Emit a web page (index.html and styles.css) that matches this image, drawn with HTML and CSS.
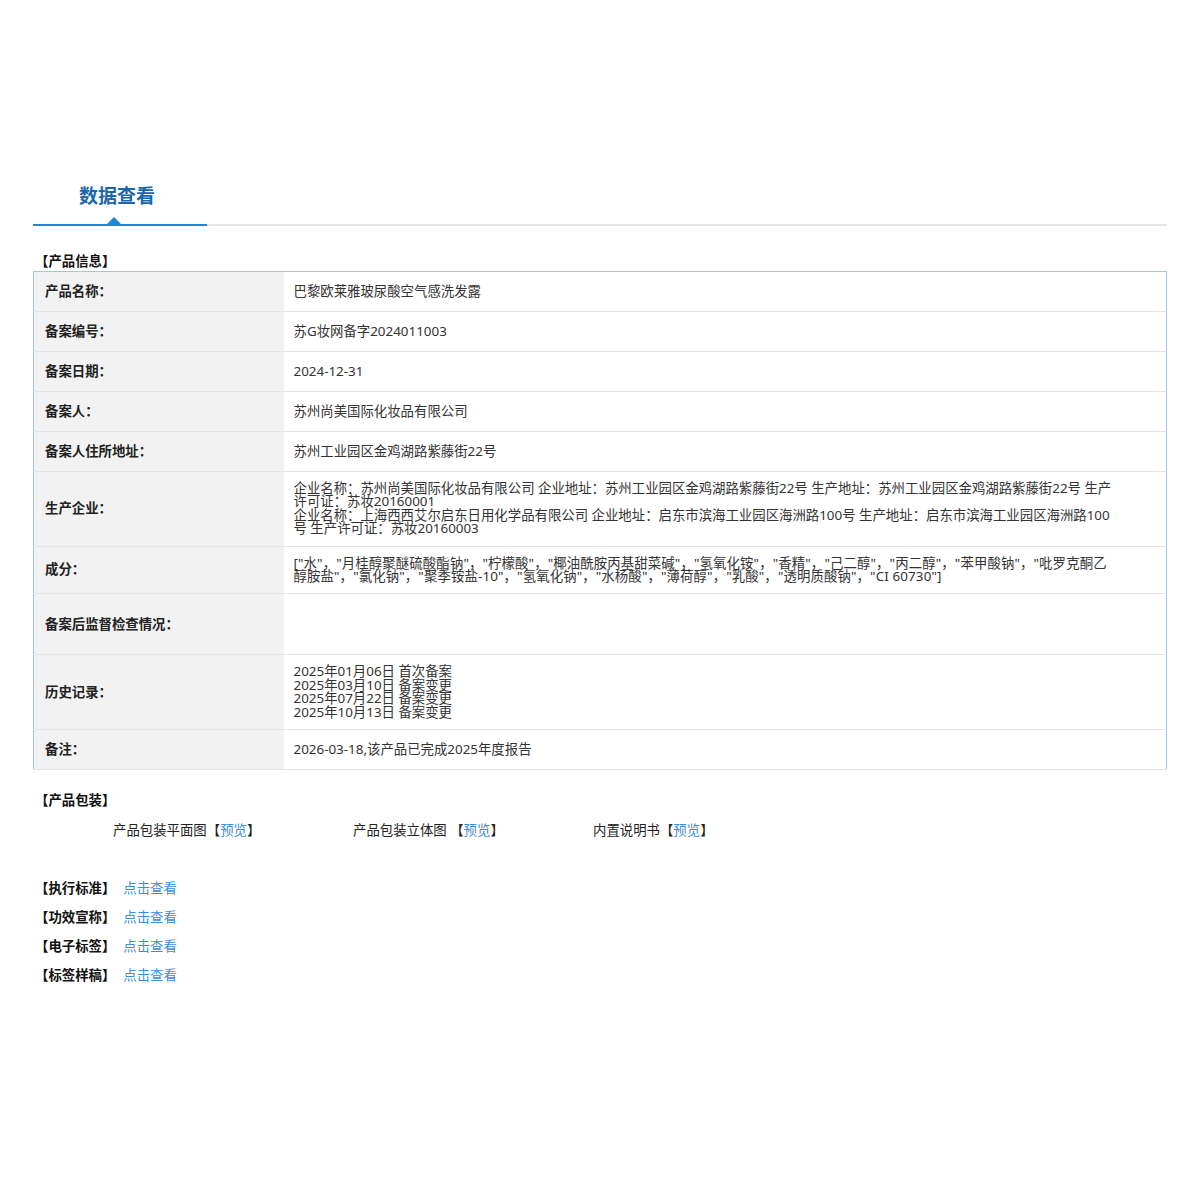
FILE: index.html
```html
<!DOCTYPE html>
<html lang="zh-CN">
<head>
<meta charset="utf-8">
<title>数据查看</title>
<link rel="stylesheet" href="styles.css">
</head>
<body>
<div class="page">
  <div class="tabs">
    <div class="tab-active"><span class="tab-text">数据查看</span><span class="tab-arrow"></span></div>
  </div>

  <div class="sec-title sec-first">【产品信息】</div>
  <table class="info">
    <tr><th>产品名称：</th><td>巴黎欧莱雅玻尿酸空气感洗发露</td></tr>
    <tr><th>备案编号：</th><td>苏G妆网备字2024011003</td></tr>
    <tr><th>备案日期：</th><td>2024-12-31</td></tr>
    <tr><th>备案人：</th><td>苏州尚美国际化妆品有限公司</td></tr>
    <tr><th>备案人住所地址：</th><td>苏州工业园区金鸡湖路紫藤街22号</td></tr>
    <tr><th>生产企业：</th><td class="multi">企业名称：苏州尚美国际化妆品有限公司 企业地址：苏州工业园区金鸡湖路紫藤街22号 生产地址：苏州工业园区金鸡湖路紫藤街22号 生产许可证：苏妆20160001<br>企业名称：上海西西艾尔启东日用化学品有限公司 企业地址：启东市滨海工业园区海洲路100号 生产地址：启东市滨海工业园区海洲路100号 生产许可证：苏妆20160003</td></tr>
    <tr><th>成分：</th><td class="multi ingredients">["水"，"月桂醇聚醚硫酸酯钠"，"柠檬酸"，"椰油酰胺丙基甜菜碱"，"氢氧化铵"，"香精"，"己二醇"，"丙二醇"，"苯甲酸钠"，"吡罗克酮乙醇胺盐"，"氯化钠"，"聚季铵盐-10"，"氢氧化钠"，"水杨酸"，"薄荷醇"，"乳酸"，"透明质酸钠"，"CI 60730"]</td></tr>
    <tr class="tall"><th>备案后监督检查情况：</th><td></td></tr>
    <tr><th>历史记录：</th><td class="multi">2025年01月06日 首次备案<br>2025年03月10日 备案变更<br>2025年07月22日 备案变更<br>2025年10月13日 备案变更</td></tr>
    <tr><th>备注：</th><td>2026-03-18,该产品已完成2025年度报告</td></tr>
  </table>

  <div class="sec-title sec-pack">【产品包装】</div>
  <div class="pack">
    <div class="pack-item">产品包装平面图【<a href="#">预览</a>】</div>
    <div class="pack-item">产品包装立体图 【<a href="#">预览</a>】</div>
    <div class="pack-item">内置说明书【<a href="#">预览</a>】</div>
  </div>

  <div class="links">
    <div class="link-row"><b>【执行标准】</b><a href="#">点击查看</a></div>
    <div class="link-row"><b>【功效宣称】</b><a href="#">点击查看</a></div>
    <div class="link-row"><b>【电子标签】</b><a href="#">点击查看</a></div>
    <div class="link-row"><b>【标签样稿】</b><a href="#">点击查看</a></div>
  </div>
</div>
</body>
</html>
```

FILE: styles.css
```css
* { box-sizing: border-box; }
html, body { margin: 0; padding: 0; background: #fff; }
body {
  font-family: "Noto Sans", "Noto Sans CJK SC", sans-serif;
  font-size: 13.4px;
  color: #333;
}
.page {
  padding: 178px 33px 0 33px;
}
.tabs {
  border-bottom: 2px solid #e6e6e6;
  height: 48px;
}
.tab-active {
  position: relative;
  width: 174px;
  height: 48px;
  border-bottom: 2px solid #1c86d8;
  margin-bottom: -2px;
  padding-left: 46px;
  font-size: 19px;
  font-weight: bold;
  color: #1a66ad;
  line-height: 36px;
}
.tab-arrow {
  position: absolute;
  left: 74px;
  bottom: 0;
  width: 0;
  height: 0;
  border-left: 7px solid transparent;
  border-right: 7px solid transparent;
  border-bottom: 7px solid #1c86d8;
}
.sec-title {
  font-weight: bold;
  color: #111;
  line-height: 18px;
  margin-left: 2px;
}
.sec-first { margin-top: 26px; }
table.info {
  width: 100%;
  border-collapse: collapse;
  border: 1px solid #a5c2ee;
  margin-top: 1px;
}
table.info th, table.info td {
  border-bottom: 1px solid #e4e4e4;
  height: 40px;
  vertical-align: middle;
  line-height: 13.4px;
  padding: 10px 0;
}
table.info th {
  width: 250px;
  background: #f2f2f2;
  text-align: left;
  font-weight: bold;
  color: #222;
  padding-left: 11px;
}
table.info td {
  padding-left: 10px;
  padding-right: 53px;
  color: #333;
}
table.info td.ingredients { letter-spacing: 0.12px; }
table.info tr.tall th, table.info tr.tall td { height: 61px; }
.sec-pack { margin-top: 21px; }
.pack {
  display: flex;
  margin-top: 12px;
  line-height: 18px;
}
.pack-item {
  width: 240px;
  padding-left: 80px;
  color: #222;
}
.pack a, .links a {
  color: #3a8ee0;
  text-decoration: none;
}
.links {
  margin-top: 40px;
  display: flex;
  flex-direction: column;
  gap: 11px;
}
.link-row {
  line-height: 18px;
  display: flex;
  gap: 8px;
  margin-left: 2px;
}
.link-row b { color: #111; }
```
